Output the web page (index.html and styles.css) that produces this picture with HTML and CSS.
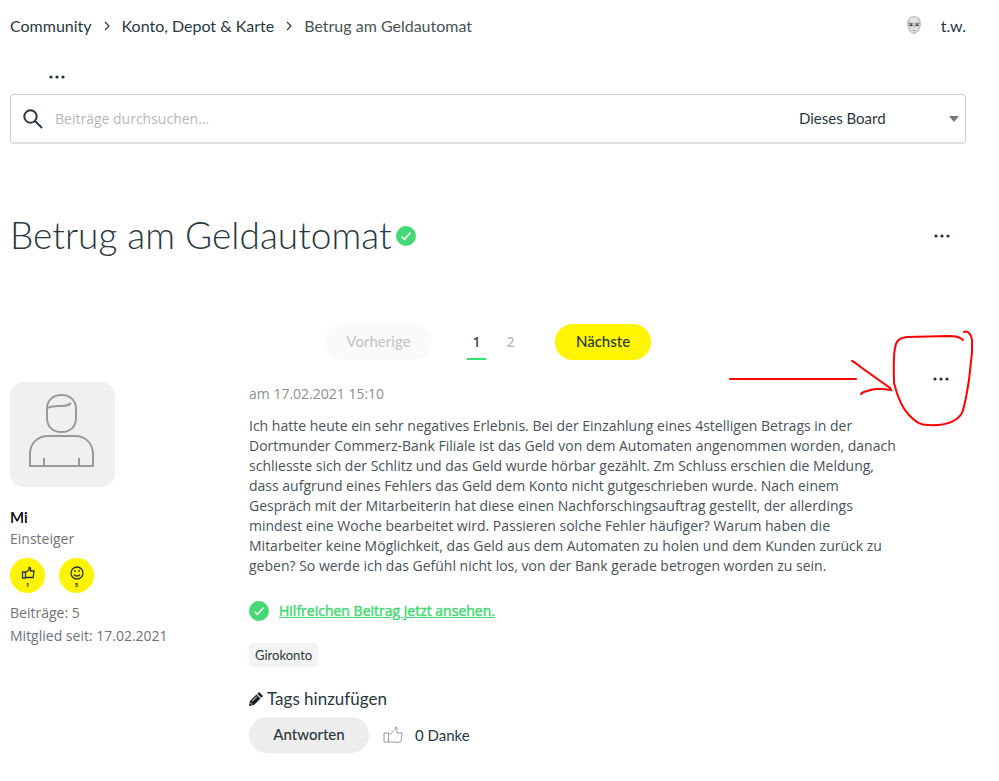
FILE: index.html
```html
<!DOCTYPE html>
<html lang="de">
  <head>
    <meta charset="UTF-8">
    <meta name="viewport" content="width=device-width, initial-scale=1.0">
    <title>Betrug am Geldautomat - Community</title>
    <link rel="stylesheet" href="styles.css">
  </head>
  <body>
    <div class="page">
      <header class="top-bar">
        <nav class="breadcrumb" aria-label="Breadcrumb">
          <a href="#">Community</a>
          <svg class="chevron" viewBox="0 0 6 10"><path d="M1 1l4 4-4 4"/></svg>
          <a href="#">Konto, Depot &amp; Karte</a>
          <svg class="chevron" viewBox="0 0 6 10"><path d="M1 1l4 4-4 4"/></svg>
          <span class="current">Betrug am Geldautomat</span>
        </nav>
        <a href="#" class="user">
          <svg class="user-face" viewBox="0 0 14 18">
            <path d="M7 0.500C3 0.500 0.600 3 0.600 7c0 6 3 10.500 6.400 10.500S13.400 13 13.400 7C13.400 3 11 0.500 7 0.500z" fill="#cfcfcf" stroke="#a5a5a5" stroke-width=".6"/>
            <ellipse cx="7" cy="4" rx="4" ry="2.500" fill="#e2e2e2"/>
            <ellipse cx="7" cy="13" rx="3.500" ry="3" fill="#e0e0e0"/>
            <path d="M1.500 7.600h4.200M8.300 7.600h4.200" stroke="#777" stroke-width="1"/>
            <path d="M2.600 9.200h2.800M8.600 9.200h2.800" stroke="#333" stroke-width="1.500"/>
            <path d="M7 9v3M5.200 14.500h3.600" stroke="#999" stroke-width=".8"/>
          </svg>
          <span>t.w.</span>
        </a>
      </header>

      <button class="dots-btn nav-dots" aria-label="Menü">
        <svg class="dots" viewBox="0 0 16 4"><circle cx="2" cy="2" r="1.600"/><circle cx="8" cy="2" r="1.600"/><circle cx="14" cy="2" r="1.600"/></svg>
      </button>

      <form class="search">
        <button type="button" class="search-btn" aria-label="Suchen">
          <svg viewBox="0 0 20 20"><circle cx="7.500" cy="7.500" r="6.200"/><path d="M12 12l7 7"/></svg>
        </button>
        <input type="text" placeholder="Beiträge durchsuchen..." aria-label="Beiträge durchsuchen">
        <div class="board-select">
          <select aria-label="Suchbereich">
            <option>Dieses Board</option>
          </select>
          <svg class="caret" viewBox="0 0 10 6"><path d="M0 0h10L5 6z"/></svg>
        </div>
      </form>

      <div class="title-row">
        <h1>Betrug am Geldautomat</h1>
        <svg class="check" viewBox="0 0 20 20"><circle cx="10" cy="10" r="10"/><path d="M5.500 10.500l3 3 6-7"/></svg>
        <button class="dots-btn title-dots" aria-label="Optionen">
          <svg class="dots" viewBox="0 0 16 4"><circle cx="2" cy="2" r="1.600"/><circle cx="8" cy="2" r="1.600"/><circle cx="14" cy="2" r="1.600"/></svg>
        </button>
      </div>

      <nav class="pager" aria-label="Seiten">
        <button class="pill prev" disabled>Vorherige</button>
        <div class="pages">
          <a href="#" class="active">1</a>
          <a href="#">2</a>
        </div>
        <button class="pill next">Nächste</button>
      </nav>

      <article class="post">
        <aside class="author">
          <svg class="avatar" viewBox="0 0 105 105">
            <path d="M37 27c0-9 6-14 14.500-14S66 18 66 27v9c0 9-6 14-14.500 14S37 45 37 36z"/>
            <path d="M38 26c5-3 10-2 15-2 4 0 6-1 8-3"/>
            <path d="M20 84V72c0-11 8-18 18-18h27c10 0 18 7 18 18v12zM34 84v-8M69 84v-8"/>
          </svg>
          <a href="#" class="author-name">Mi</a>
          <p class="rank">Einsteiger</p>
          <div class="badges">
            <div class="badge">
              <svg viewBox="0 0 14 14"><path d="M1.500 6h3v6h-3zM4.500 6.500L8 4V1.500l1.500.5V5H13l-.8 6.500H4.500"/></svg>
              <span>1</span>
            </div>
            <div class="badge">
              <svg viewBox="0 0 14 14"><circle cx="7" cy="7" r="6"/><path d="M5 4v2M9 4v2M4 8.500c1 2 5 2 6 0"/></svg>
              <span>5</span>
            </div>
          </div>
          <p class="stat">Beiträge: 5</p>
          <p class="stat">Mitglied seit: 17.02.2021</p>
        </aside>

        <div class="post-main">
          <p class="date">am 17.02.2021 15:10</p>
          <p class="text">Ich hatte heute ein sehr negatives Erlebnis. Bei der Einzahlung eines 4stelligen Betrags in der Dortmunder Commerz-Bank Filiale ist das Geld von dem Automaten angenommen worden, danach schliesste sich der Schlitz und das Geld wurde hörbar gezählt. Zm Schluss erschien die Meldung, dass aufgrund eines Fehlers das Geld dem Konto nicht gutgeschrieben wurde. Nach einem Gespräch mit der Mitarbeiterin hat diese einen Nachforschingsauftrag gestellt, der allerdings mindest eine Woche bearbeitet wird. Passieren solche Fehler häufiger? Warum haben die Mitarbeiter keine Möglichkeit, das Geld aus dem Automaten zu holen und dem Kunden zurück zu geben? So werde ich das Gefühl nicht los, von der Bank gerade betrogen worden zu sein.</p>
          <div class="solution">
            <svg class="check" viewBox="0 0 20 20"><circle cx="10" cy="10" r="10"/><path d="M5.500 10.500l3 3 6-7"/></svg>
            <a href="#">Hilfreichen Beitrag jetzt ansehen.</a>
          </div>
          <a href="#" class="tag">Girokonto</a>
          <a href="#" class="add-tags">
            <svg viewBox="0 0 14 14"><path d="M0 14l1-5 6.500-6.500 4 4L5 13z"/><path d="M8.300 1.700L10 0l4 4-1.700 1.700z"/><path class="shine" d="M3 9.500l5-5M1.500 11l1.500 1.500"/></svg>
            Tags hinzufügen
          </a>
          <div class="actions">
            <button class="pill reply">Antworten</button>
            <button class="thumb" aria-label="Danke">
              <svg viewBox="0 0 20 18"><path d="M1 7h4.500v9H1zM5.500 8h2l5-5V1l1.500.5V7h5l-1 8.500-3 1-4.500-.5h-5"/></svg>
            </button>
            <span class="thanks">0 Danke</span>
          </div>
        </div>

        <div class="post-menu">
          <button class="dots-btn" aria-label="Beitragsoptionen">
            <svg class="dots" viewBox="0 0 16 4"><circle cx="2" cy="2" r="1.600"/><circle cx="8" cy="2" r="1.600"/><circle cx="14" cy="2" r="1.600"/></svg>
          </button>
          <!-- Hand-drawn arrow and circle around the menu -->
          <svg class="marker" viewBox="0 0 250 100">
            <path d="M5 54H131"/>
            <path d="M127 36c3 1 6 4 10 7l28 20 1 2c-10-2-20-1-23 1-4 0-5 1-7 3"/>
            <path d="M238 15c-4-4-9-4-14-4l-42 1c-8 1-11 4-12 11-2 10-1 24-1 35 3 12 8 25 15 32 7 7 11 10 19 10 17 1 28-2 34-12 4-11 5-22 7-33l3-28c0-10 1-15-3-19-1-1-3-2-5-1"/>
          </svg>
        </div>
      </article>
    </div>
  </body>
</html>
```

FILE: styles.css
```css
/* Base styles */
* {
  box-sizing: border-box;
}
body {
  margin: 0;
  background: #fff;
  font-family: 'Open Sans', sans-serif;
  font-size: 14px;
  line-height: 20px;
  color: #4a5257;
}
p, h1 {
  margin: 0;
}
a {
  color: inherit;
  text-decoration: none;
}
button, input, select {
  font: inherit;
  color: inherit;
  border: none;
  background: none;
  padding: 0;
  margin: 0;
}
button {
  cursor: pointer;
}
svg {
  display: block;
  flex: none;
  fill: none;
}
.page {
  padding: 16px 33px 28px 10px;
}
/* Top bar */
.top-bar,
.search,
.pill,
h1,
.author-name,
.tag,
.add-tags,
.thanks {
  font-family: Lato, sans-serif;
  color: #283840;
}
.top-bar {
  display: flex;
  justify-content: space-between;
  font-size: 16px;
}
.breadcrumb {
  display: flex;
  align-items: center;
  gap: 12px;
}
.current {
  color: #4a5257;
}
.chevron {
  width: 6px;
  height: 10px;
  stroke: #283840;
  stroke-width: 1.2;
}
.user {
  display: flex;
  gap: 20px;
}
.user-face {
  width: 14px;
  height: 18px;
}
/* Three dot menus */
.dots-btn {
  display: flex;
  align-items: center;
  justify-content: center;
  width: 32px;
  height: 20px;
}
.dots {
  width: 16px;
  height: 4px;
  fill: #1f2f38;
}
.nav-dots {
  margin: 31px 0 7px 31px;
}
/* Search */
.search {
  display: flex;
  align-items: center;
  height: 50px;
  border: 1px solid #ccc;
  border-bottom: 2px solid #ddd;
  border-radius: 4px;
}
.search-btn {
  padding: 0 12px;
}
.search-btn svg {
  width: 20px;
  height: 20px;
  stroke: #283840;
  stroke-width: 2;
}
.search input {
  flex: 1;
  min-width: 0;
  height: 40px;
  font-family: 'Open Sans', sans-serif;
  outline: none;
}
.search input::placeholder {
  color: #b5b9bb;
}
.board-select {
  position: relative;
  width: 166px;
}
.board-select select {
  width: 100%;
  height: 40px;
  padding-bottom: 2px;
  appearance: none;
  outline: none;
  font-size: 15px;
}
.caret {
  position: absolute;
  top: 17px;
  right: 6px;
  width: 10px;
  height: 6px;
  fill: #777;
  pointer-events: none;
}
/* Title */
.title-row {
  display: flex;
  align-items: center;
  gap: 4px;
  margin-top: 68px;
}
h1 {
  padding-bottom: 2px;
  font-size: 37px;
  line-height: 46px;
  font-weight: 300;
}
.check {
  width: 20px;
  height: 20px;
}
.check circle {
  fill: #45d975;
}
.check path {
  stroke: #fff;
  stroke-width: 1.5;
}
.title-dots {
  margin-left: auto;
  margin-right: 8px;
}
/* Pager */
.pager {
  display: flex;
  justify-content: center;
  align-items: center;
  margin-top: 64px;
}
.pill {
  height: 36px;
  padding: 0 19px 2px;
  border-radius: 18px;
  font-size: 15px;
  font-weight: 500;
}
.prev {
  width: 107px;
  background: #fafafa;
  color: #c3c6c8;
}
.next {
  width: 96px;
  background: #fff500;
}
.pages {
  display: flex;
  gap: 15px;
  margin: 0 35px;
}
.pages a {
  width: 19px;
  padding: 8px 0 6px;
  border-bottom: 2px solid transparent;
  text-align: center;
  font-weight: 600;
  color: #b9bdbf;
}
.pages .active {
  color: #3f474c;
  border-color: #2de36b;
}
/* Post */
.post {
  display: grid;
  grid-template-columns: 239px minmax(0, 1fr) 68px;
  margin-top: 22px;
}
.author {
  color: #6e7376;
}
.avatar {
  width: 105px;
  height: 105px;
  background: #f0f0f0;
  border-radius: 14px;
  stroke: #999;
  stroke-width: 2;
}
.author-name {
  display: block;
  margin-top: 18px;
  font-size: 15px;
  line-height: 24px;
  font-weight: 600;
  color: #000;
}
.badges {
  display: flex;
  gap: 14px;
  margin: 9px 0 8px;
}
.badge {
  display: flex;
  flex-direction: column;
  align-items: center;
  width: 35px;
  height: 35px;
  padding-top: 8px;
  border-radius: 50%;
  background: #fff500;
  color: #283840;
  font-size: 6px;
  line-height: 10px;
  font-weight: 700;
}
.badge svg {
  width: 14px;
  height: 14px;
  stroke: #283840;
  stroke-width: 1.3;
}
.stat {
  line-height: 23px;
}
.date {
  padding-top: 2px;
  color: #8b8f92;
}
.text {
  margin-top: 12px;
}
.solution {
  display: flex;
  align-items: center;
  gap: 10px;
  margin-top: 25px;
}
.solution a {
  color: #45d975;
  -webkit-text-stroke: 0.5px #45d975;
  text-decoration: underline;
}
.tag {
  display: inline-block;
  margin-top: 22px;
  padding: 2px 6px;
  border-radius: 4px;
  background: #f3f3f3;
  font-size: 13px;
}
.add-tags {
  display: flex;
  align-items: center;
  gap: 4px;
  margin: 22px 0 8px;
  font-size: 17px;
}
.add-tags svg {
  width: 14px;
  height: 14px;
  fill: #151c20;
}
.add-tags .shine {
  stroke: #fff;
  stroke-width: 1;
}
.actions {
  display: flex;
  align-items: center;
}
.reply {
  width: 120px;
  background: #ededed;
}
.thumb {
  margin: 0 12px 0 14px;
}
.thumb svg {
  width: 20px;
  height: 18px;
  stroke: #999;
  stroke-width: 1;
}
.thanks {
  font-size: 15px;
}
/* Post menu with marker drawing on top */
.post-menu {
  position: relative;
}
.post-menu .dots-btn {
  margin: -13px 9px 0 auto;
}
.marker {
  position: absolute;
  top: -57px;
  right: -9px;
  width: 250px;
  height: 100px;
  overflow: visible;
  stroke: #f00;
  stroke-width: 2;
  stroke-linecap: round;
  pointer-events: none;
}
```
